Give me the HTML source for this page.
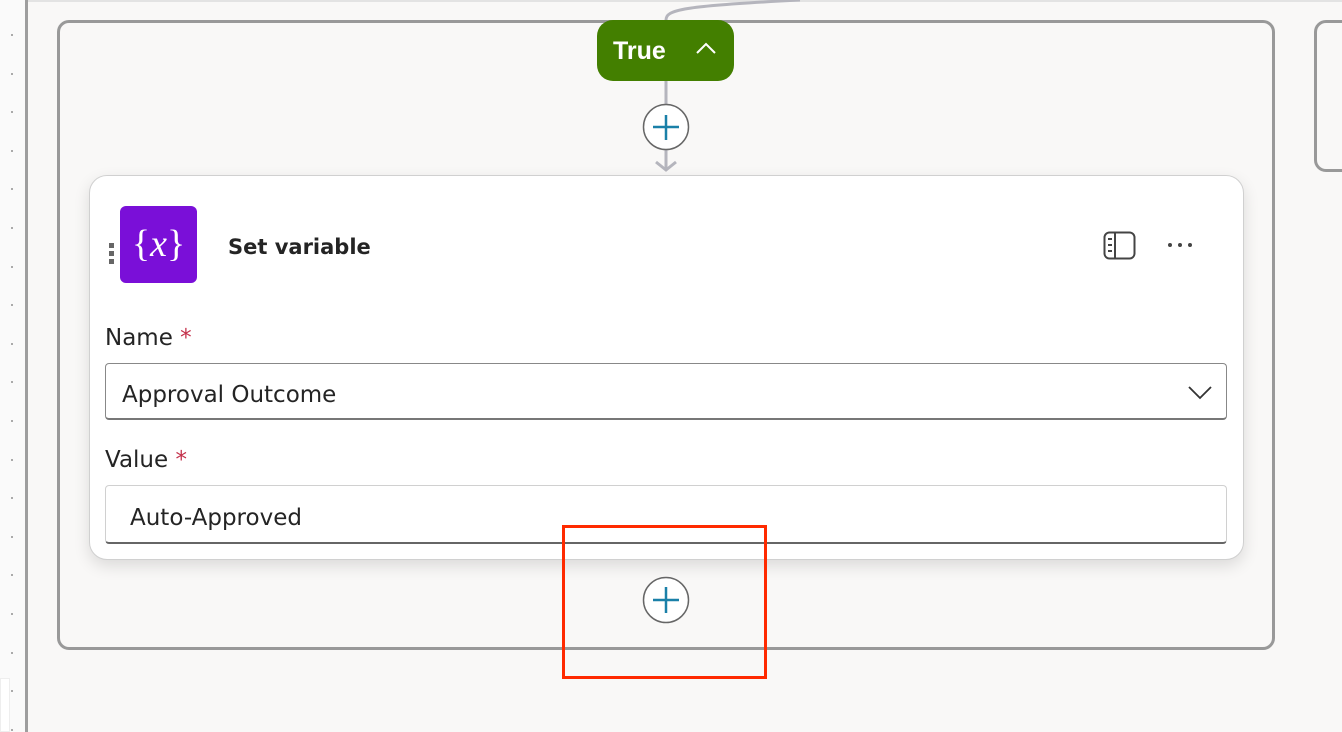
<!DOCTYPE html>
<html><head><style>
body{margin:0;width:1342px;height:732px;background:#f9f8f7;position:relative;overflow:hidden;font-family:"DejaVu Sans","Liberation Sans",sans-serif;color:#242424}
.a{position:absolute;box-sizing:border-box}
.dot{position:absolute;left:11px;width:2px;height:2px;background:#aaa}
</style></head><body>
<div class="a" style="left:0;top:0;width:1342px;height:2px;background:#e3e3e3"></div>
<div class="a" style="left:0;top:0;width:26px;height:732px;background:#fafafa"></div>
<div class="a" style="left:25px;top:0;width:3px;height:732px;background:#9e9e9e"></div>
<div class="a" style="left:0;top:678px;width:10px;height:54px;background:#fff;border:1px solid #eee"></div>
<div id="dots"></div>
<div class="a" style="left:57px;top:20px;width:1218px;height:630px;border:3px solid #999;border-radius:12px"></div>
<div class="a" style="left:1314px;top:20px;width:40px;height:152px;border:3px solid #999;border-radius:12px"></div>
<svg class="a" style="left:560px;top:0" width="300" height="180">
<path d="M106 20 C106 10 120 6 240 0" stroke="#b5b5bd" stroke-width="3" fill="none"/>
<path d="M106 80 V170 M96 162 L106 170 L116 162" stroke="#b5b5bd" stroke-width="3" fill="none"/>
<circle cx="106" cy="127" r="22.5" fill="#fff" stroke="#666" stroke-width="1.5"/>
<path d="M106 115 V140 M93 127 H119" stroke="#1a80a8" stroke-width="2.5"/>
</svg>
<div class="a" style="left:597px;top:20px;width:137px;height:61px;background:#437f00;border-radius:16px;color:#fff;font-family:'Liberation Sans',sans-serif;font-size:25px;font-weight:600;padding:17px 0 0 16px">True</div>
<svg class="a" style="left:694px;top:40px" width="26" height="20"><path d="M3 13 L12 4 L21 13" stroke="#fff" stroke-width="2" fill="none"/></svg>
<div class="a" style="left:89px;top:175px;width:1155px;height:385px;background:#fff;border:1px solid #d0d0d0;border-radius:18px;box-shadow:0 6px 16px rgba(0,0,0,.12)"></div>
<div class="a" style="left:109px;top:243px;width:5px;height:5px;background:#666;box-shadow:0 8px 0 #666,0 16px 0 #666"></div>
<div class="a" style="left:120px;top:206px;width:77px;height:77px;background:#7a0fd8;border-radius:6px;color:#fff;font-family:'Liberation Serif',serif;font-size:38px;text-align:center;line-height:76px"><span>{</span><i>x</i><span>}</span></div>
<div class="a" style="left:228px;top:235px;font-size:21px;font-weight:bold">Set variable</div>
<svg class="a" style="left:1102px;top:230px" width="36" height="32"><rect x="2.5" y="2.5" width="30" height="26" rx="5" fill="none" stroke="#444" stroke-width="2"/><path d="M13 3 V28 M6 9 H10 M6 15 H10 M6 21 H10" stroke="#444" stroke-width="2"/></svg>
<div class="a" style="left:1168px;top:243px;width:4px;height:4px;border-radius:2px;background:#444;box-shadow:10px 0 0 #444,20px 0 0 #444"></div>
<div class="a" style="left:105px;top:325px;font-size:23px">Name <span style="color:#c4314b">*</span></div>
<div class="a" style="left:105px;top:363px;width:1122px;height:57px;border:1px solid #888;border-bottom:2px solid #777;border-radius:4px;font-size:23px;padding:18px 0 0 16px">Approval Outcome</div>
<svg class="a" style="left:1186px;top:382px" width="28" height="20"><path d="M3 5 L14 16 L25 5" stroke="#333" stroke-width="1.8" fill="none"/></svg>
<div class="a" style="left:105px;top:447px;font-size:23px">Value <span style="color:#c4314b">*</span></div>
<div class="a" style="left:105px;top:485px;width:1122px;height:59px;border:1px solid #d0d0d0;border-bottom:2px solid #666;border-radius:4px;font-size:23px;padding:19px 0 0 24px">Auto-Approved</div>
<svg class="a" style="left:640px;top:574px" width="52" height="52"><circle cx="26" cy="26" r="22.5" fill="#fff" stroke="#666" stroke-width="1.5"/><path d="M26 13 V39 M13 26 H39" stroke="#1a80a8" stroke-width="2.5"/></svg>
<div class="a" style="left:562px;top:525px;width:205px;height:154px;border:3px solid #ff2a00"></div>
<script>
var d=document.getElementById('dots'),h='';for(var y=34;y<732;y+=38.6)h+='<div class="dot" style="top:'+Math.round(y)+'px"></div>';d.innerHTML=h;
</script>
</body></html>
